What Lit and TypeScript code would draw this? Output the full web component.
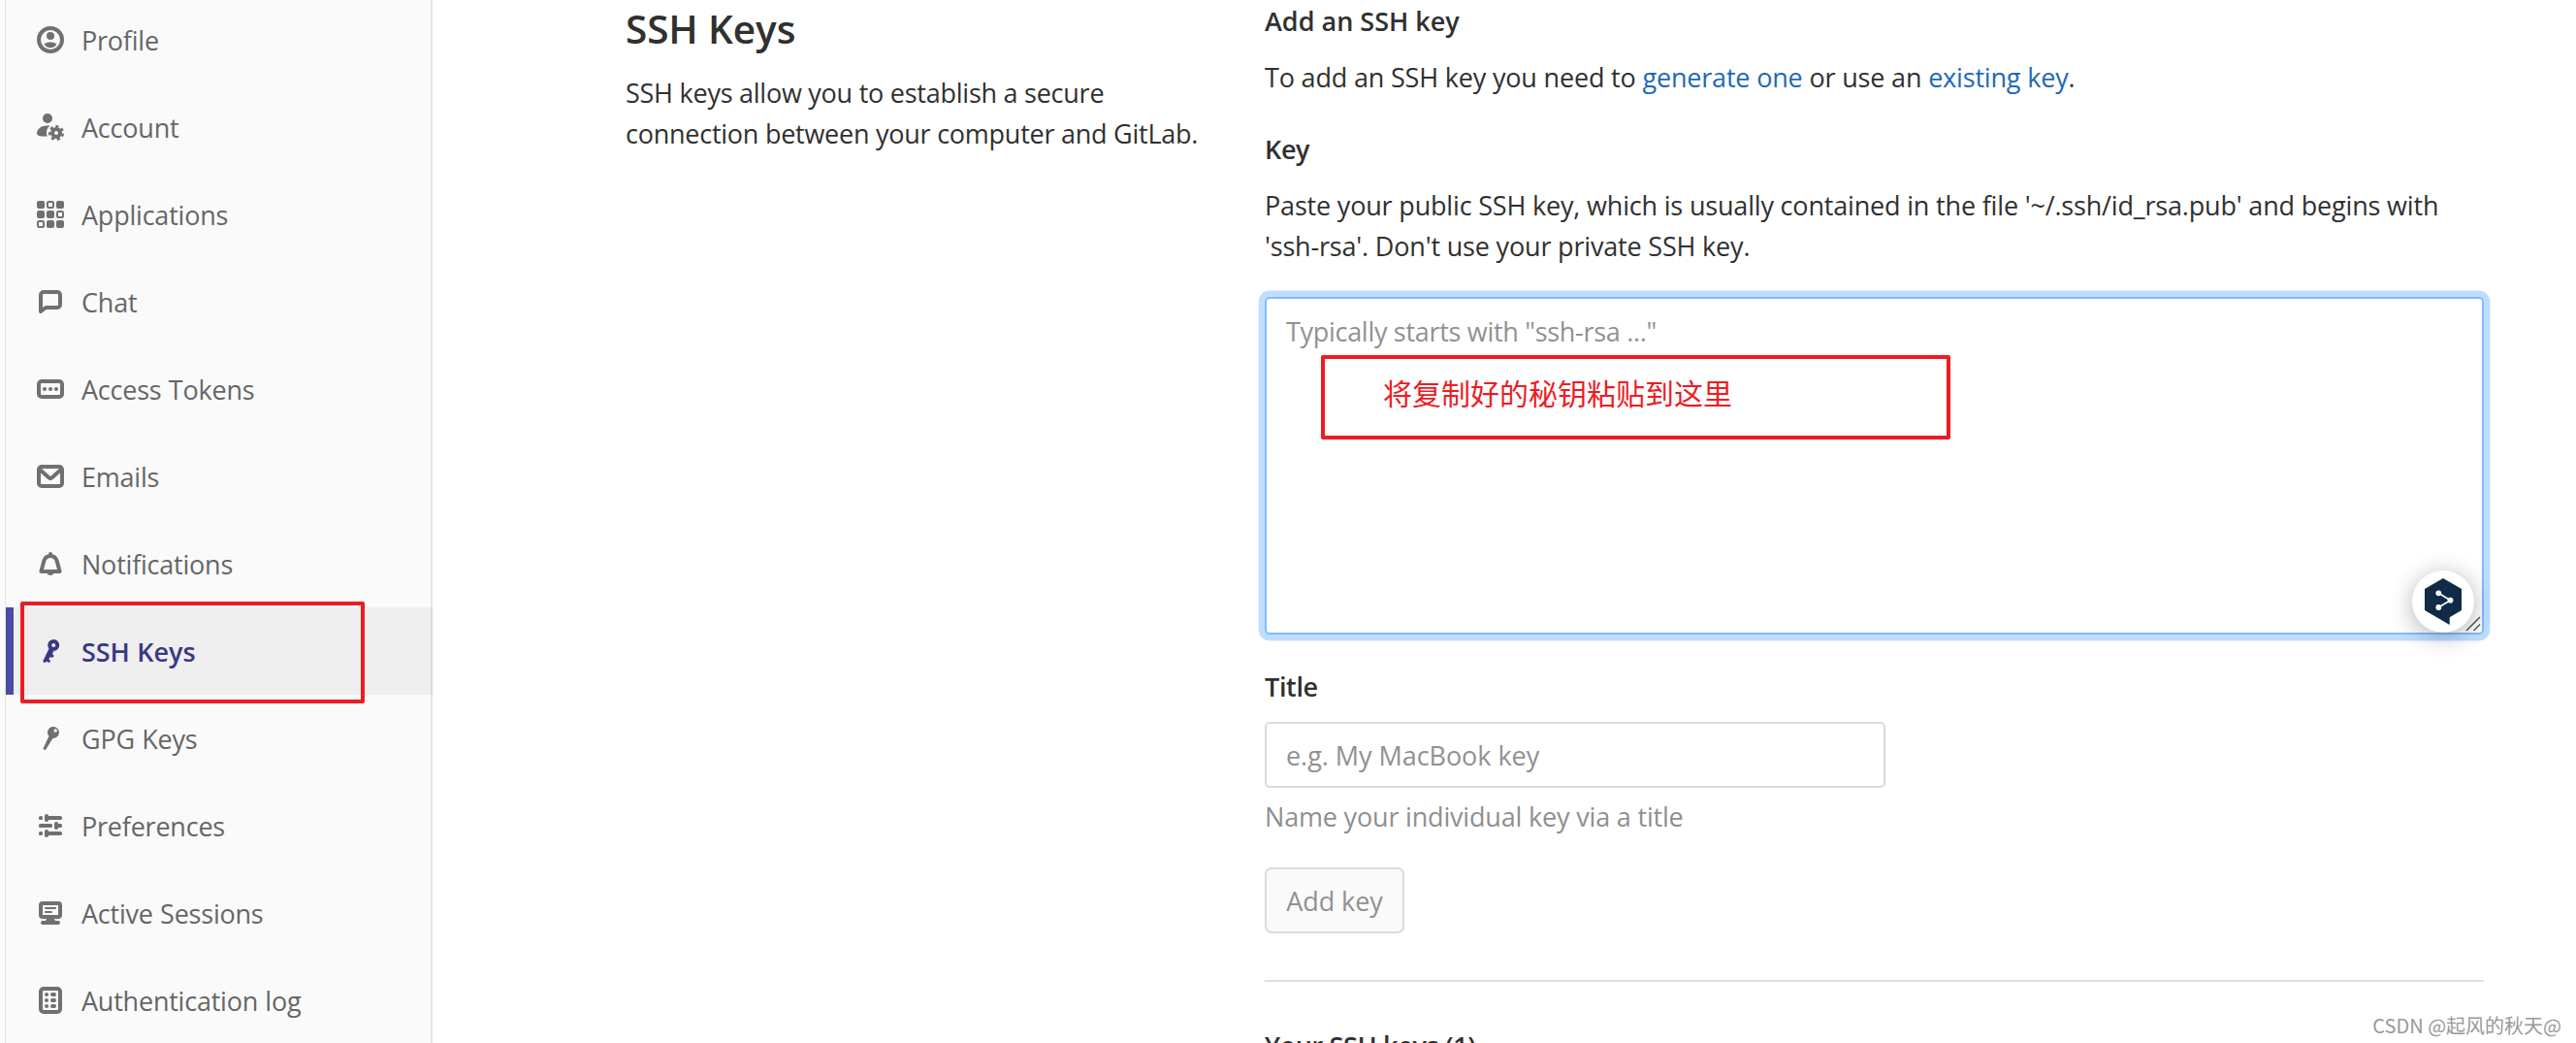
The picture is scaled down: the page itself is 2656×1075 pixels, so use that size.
import { LitElement, html, css, svg } from "lit";
import { customElement, property } from "lit/decorators.js";
import { classMap } from "lit/directives/class-map.js";

const icons = {
  profile: svg`
    <circle cx="8" cy="8" r="6" fill="none" stroke="currentColor" stroke-width="2" />
    <circle cx="8" cy="6" r="2" />
    <path d="M4.8 10.1C5.6 9.5 6.7 9.2 8 9.2s2.4.3 3.2.9C10.7 11.4 9.5 12.1 8 12.1s-2.700-.7-3.200-2z" />
  `,
  account: svg`
    <circle cx="6.5" cy="3.5" r="2.5" />
    <path d="M7.8 7.2C6.6 8 6 9.4 6 10.8c0 .8.1 1.4.4 2H3.5C2 12.8 1 12 1 11.4 1 8.9 3.2 7.2 6.5 7.2z" />
    <circle cx="11" cy="11" r="2" fill="none" stroke="currentColor" stroke-width="2" />
    <circle cx="11" cy="11" r="3.4" fill="none" stroke="currentColor" stroke-width="1.3" stroke-dasharray="1.53" stroke-dashoffset="-.3" />
  `,
  applications: svg`
    <rect x="1" y="1" width="4" height="4" rx="1" />
    <rect x="11" y="1" width="4" height="4" rx="1" />
    <rect x="1" y="6" width="4" height="4" rx="1" />
    <rect x="6" y="6" width="4" height="4" rx="1" />
    <rect x="6" y="11" width="4" height="4" rx="1" />
    <rect x="11" y="11" width="4" height="4" rx="1" />
    <g fill="none" stroke="currentColor">
      <rect x="6.5" y="1.5" width="3" height="3" rx=".6" />
      <rect x="11.5" y="6.5" width="3" height="3" rx=".6" />
      <rect x="1.5" y="11.5" width="3" height="3" rx=".6" />
    </g>
  `,
  chat: svg`
    <path d="M3 13V4.5A1.5 1.5 0 0 1 4.5 3h7A1.5 1.5 0 0 1 13 4.5v5a1.5 1.5 0 0 1-1.5 1.5H5.6z"
      fill="none" stroke="currentColor" stroke-width="2" stroke-linejoin="round" />
  `,
  token: svg`
    <rect x="2" y="4" width="12" height="8" rx="1.5" fill="none" stroke="currentColor" stroke-width="2" />
    <circle cx="5" cy="8" r="1" />
    <circle cx="8" cy="8" r="1" />
    <circle cx="11" cy="8" r="1" />
  `,
  email: svg`
    <g fill="none" stroke="currentColor" stroke-width="2">
      <rect x="2" y="3" width="12" height="10" rx="1.5" />
      <path d="M2.3 4.3L7.3 8.7a1 1 0 0 0 1.4 0L13.7 4.3" />
    </g>
  `,
  bell: svg`
    <path d="M3.2 12L4.6 6.8C5.1 5 6.3 4 8 4s2.9 1 3.4 2.8L12.8 12z"
      fill="none" stroke="currentColor" stroke-width="2" stroke-linejoin="round" />
    <circle cx="8" cy="3" r="1" />
    <path d="M6.3 12.9h3.4C9.5 13.6 8.8 14 8 14s-1.500-.4-1.700-1.100z" />
  `,
  key: svg`
    <circle cx="9.6" cy="5" r="2" fill="none" stroke="currentColor" stroke-width="2" />
    <path d="M7.3 6.6l2.4 1.6-.8 1.3.5.4c.4.3.4.7.2 1l-.2.2c-.3.4-.7.4-1.1.2l-.4-.3-.8 1.2.6.4c.3.2.4.6.1.9-.3.5-.8.5-1.1.3l-.8-.5-.3.4c-.3.4-.7.4-1 .2-.4-.3-.5-.6-.3-1z" />
  `,
  gpg: svg`
    <path fill-rule="evenodd" d="M9.7 2a3 3 0 1 1-.5 6l-3.4 5.5c-.3.5-.8.6-1.1.4-.3-.2-.4-.5-.3-1L7.2 6.9A3 3 0 0 1 9.7 2zm.5 1.3a.8.8 0 1 0 .8 1.4.8.8 0 0 0-.8-1.4z" />
  `,
  preferences: svg`
    <rect x="2" y="3" width="2" height="2" rx=".8" />
    <rect x="5" y="2" width="2" height="4" rx=".9" />
    <rect x="6" y="3" width="8" height="2" rx=".8" />
    <rect x="2" y="7" width="7" height="2" rx=".8" />
    <rect x="10" y="6" width="2" height="4" rx=".9" />
    <rect x="11" y="7" width="3" height="2" rx=".8" />
    <rect x="2" y="11" width="2" height="2" rx=".8" />
    <rect x="5" y="10" width="2" height="4" rx=".9" />
    <rect x="6" y="11" width="8" height="2" rx=".8" />
  `,
  sessions: svg`
    <rect x="3" y="3" width="10" height="7" rx="1" fill="none" stroke="currentColor" stroke-width="2" />
    <rect x="5" y="5" width="6" height="1" rx=".5" />
    <rect x="5" y="7" width="4" height="1" rx=".5" />
    <path d="M6 11h4l.5 1h-5z" />
    <rect x="3" y="12" width="10" height="2" rx="1" />
  `,
  log: svg`
    <rect x="3" y="2" width="10" height="12" rx="1.5" fill="none" stroke="currentColor" stroke-width="2" />
    <circle cx="6" cy="5" r="1" />
    <circle cx="6" cy="8" r="1" />
    <circle cx="6" cy="11" r="1" />
    <rect x="8" y="4" width="3" height="2" rx="1" />
    <rect x="8" y="7" width="3" height="2" rx="1" />
    <rect x="8" y="10" width="3" height="2" rx="1" />
  `,
};

type IconName = keyof typeof icons;

const links: { icon: IconName; label: string; active?: boolean }[] = [
  { icon: "profile", label: "Profile" },
  { icon: "account", label: "Account" },
  { icon: "applications", label: "Applications" },
  { icon: "chat", label: "Chat" },
  { icon: "token", label: "Access Tokens" },
  { icon: "email", label: "Emails" },
  { icon: "bell", label: "Notifications" },
  { icon: "key", label: "SSH Keys", active: true },
  { icon: "gpg", label: "GPG Keys" },
  { icon: "preferences", label: "Preferences" },
  { icon: "sessions", label: "Active Sessions" },
  { icon: "log", label: "Authentication log" },
];

@customElement("nav-icon")
class NavIcon extends LitElement {
  @property() name: IconName = "profile";

  static styles = css`
    :host {
      display: block;
      width: 32px;
      height: 32px;
    }

    svg {
      display: block;
      fill: currentColor;
    }
  `;

  render() {
    return html`<svg width="32" height="32" viewBox="0 0 16 16">${icons[this.name]}</svg>`;
  }
}

@customElement("side-bar")
class Sidebar extends LitElement {
  static styles = css`
    :host {
      display: block;
      box-sizing: border-box;
      width: 446px;
      padding-left: 5px;
      background: #fafafa;
      overflow: hidden;
    }

    nav {
      box-sizing: border-box;
      height: 100%;
      border-left: 1px solid #e3e3e3;
      box-shadow: inset -2px 0 0 #e4e4e4;
      overflow: hidden;
    }

    ul {
      list-style: none;
      margin: -4px 0 0;
      padding: 0;
    }

    li {
      position: relative;
    }

    a {
      box-sizing: border-box;
      display: flex;
      align-items: center;
      column-gap: 16px;
      height: 90px;
      padding: 1px 0 0 30px;
      color: #666;
      text-decoration: none;
      letter-spacing: -0.22px;
      word-spacing: 0.5px;
    }

    nav-icon {
      margin-top: -1px;
      color: #707070;
    }

    .active {
      background: rgba(0, 0, 0, 0.045);
      box-shadow: inset 8px 0 0 #4b4ba3;
      color: #393982;
      font-weight: 600;
      letter-spacing: -0.05px;
    }

    .active nav-icon {
      color: #393982;
    }

    .marker {
      position: absolute;
      top: -6px;
      left: 15px;
      box-sizing: border-box;
      width: 355px;
      height: 105px;
      border: 4px solid #ed1c24;
      border-radius: 2px;
    }
  `;

  render() {
    return html`<nav>
      <ul>
        ${links.map(
          (link) => html`<li>
            <a class=${classMap({ active: !!link.active })}>
              <nav-icon name=${link.icon}></nav-icon>
              <span>${link.label}</span>
            </a>
            ${link.active ? html`<div class="marker"></div>` : ""}
          </li>`
        )}
      </ul>
    </nav>`;
  }
}

@customElement("key-form")
class KeyForm extends LitElement {
  static styles = css`
    :host {
      display: block;
      width: 1257px;
      padding-top: 1px;
    }

    h5,
    p,
    label {
      display: block;
      margin: 0;
      font-size: 27px;
      line-height: 42px;
    }

    h5,
    label {
      font-weight: 600;
      letter-spacing: -0.35px;
    }

    .add-heading {
      letter-spacing: 0;
    }

    p {
      margin-top: 16px;
      letter-spacing: -0.18px;
    }

    a {
      color: #1f68b8;
      text-decoration: none;
    }

    .key-label {
      margin-top: 32px;
    }

    .key-box {
      position: relative;
      margin-top: 31px;
    }

    textarea,
    input {
      display: block;
      box-sizing: border-box;
      margin: 0;
      padding: 0 20px;
      outline: none;
      background: #fff;
      font: inherit;
      letter-spacing: -0.05px;
      line-height: 42px;
      resize: none;
    }

    textarea {
      width: 100%;
      height: 348px;
      padding-top: 13px;
      border: 2px solid #80bdff;
      border-radius: 5px;
      box-shadow: 0 0 0 6.4px #bfdeff;
      letter-spacing: -0.3px;
    }

    ::placeholder {
      color: #919191;
      opacity: 1;
    }

    .grip {
      position: absolute;
      right: 3px;
      bottom: 3px;
    }

    .note {
      position: absolute;
      top: 60px;
      left: 58px;
      box-sizing: border-box;
      width: 649px;
      height: 87px;
      padding: 12px 0 0 60px;
      border: 4px solid #ed1c24;
      border-radius: 2px;
      color: #ed1c24;
      font: 30px/44px "Noto Sans CJK SC", sans-serif;
      letter-spacing: 0;
    }

    .translate {
      position: absolute;
      right: 10px;
      bottom: 2px;
      width: 64px;
      height: 64px;
      border-radius: 50%;
      background: #fff;
      box-shadow: 0 4px 24px rgba(0, 0, 0, 0.3);
    }

    .title-label {
      margin-top: 33px;
    }

    input {
      width: 640px;
      height: 68px;
      margin-top: 15px;
      border: 2px solid #dbdbdb;
      border-radius: 5px;
    }

    .help {
      margin-top: 9px;
      color: #8f8f8f;
    }

    button {
      display: block;
      box-sizing: border-box;
      width: 144px;
      height: 68px;
      margin: 31px 0 0;
      padding: 0;
      border: 2px solid #dbdbdb;
      border-radius: 7px;
      background: #fafafa;
      color: #919191;
      font: inherit;
      letter-spacing: inherit;
    }

    hr {
      height: 2px;
      margin: 48px 0 45px;
      border: 0;
      background: #dfdfdf;
    }
  `;

  render() {
    return html`
      <h5 class="add-heading">Add an SSH key</h5>
      <p>To add an SSH key you need to <a>generate one</a> or use an <a>existing key</a>.</p>

      <label class="key-label">Key</label>
      <p>
        Paste your public SSH key, which is usually contained in the file '~/.ssh/id_rsa.pub' and begins with<br />
        'ssh-rsa'. Don't use your private SSH key.
      </p>
      <div class="key-box">
        <textarea placeholder='Typically starts with "ssh-rsa ..."'></textarea>
        <svg class="grip" width="16" height="16" viewBox="0 0 16 16">
          <path d="M1 15L15 1M8.5 15L15 8.5" fill="none" stroke="#555" stroke-width="1.5" />
        </svg>
        <div class="note">将复制好的秘钥粘贴到这里</div>
        <div class="translate">
          <svg width="64" height="64" viewBox="0 0 64 64">
            <path d="M32 8L51 19V41L38.7 48.3V56L13 41V19z" fill="#0f2b46" />
            <path d="M27.3 23.3L39.5 30.7L27.3 38" fill="none" stroke="#fff" stroke-width="1.6" />
            <g fill="#fff">
              <circle cx="27.3" cy="23.3" r="2.9" />
              <circle cx="39.5" cy="30.7" r="2.9" />
              <circle cx="27.3" cy="38" r="2.9" />
            </g>
          </svg>
        </div>
      </div>

      <label class="title-label">Title</label>
      <input placeholder="e.g. My MacBook key" />
      <p class="help">Name your individual key via a title</p>
      <button>Add key</button>

      <hr />
      <h5>Your SSH keys (1)</h5>
    `;
  }
}

@customElement("app-root")
class AppRoot extends LitElement {
  static styles = css`
    :host {
      position: relative;
      display: flex;
      width: 2656px;
      height: 1075px;
      overflow: hidden;
      background: #fff;
      color: #303030;
      font-family: "Open Sans", "Noto Sans", sans-serif;
      font-size: 27px;
      letter-spacing: -0.1px;
    }

    side-bar {
      flex: none;
    }

    main {
      display: grid;
      grid-template-columns: 600px 1257px;
      column-gap: 59px;
      padding-left: 199px;
    }

    h4 {
      margin: 5px 0 20px;
      font-size: 40.5px;
      font-weight: 600;
      line-height: 50px;
      letter-spacing: -0.1px;
    }

    .intro p {
      margin: 0;
      line-height: 42px;
      letter-spacing: -0.25px;
    }

    .watermark {
      position: absolute;
      right: 15px;
      bottom: 4px;
      color: #999;
      font: 20px/28px "Noto Sans CJK SC", sans-serif;
      letter-spacing: 0;
    }
  `;

  render() {
    return html`
      <side-bar></side-bar>
      <main>
        <section class="intro">
          <h4>SSH Keys</h4>
          <p>SSH keys allow you to establish a secure<br />connection between your computer and GitLab.</p>
        </section>
        <key-form></key-form>
      </main>
      <div class="watermark">CSDN @起风的秋天@</div>
    `;
  }
}
